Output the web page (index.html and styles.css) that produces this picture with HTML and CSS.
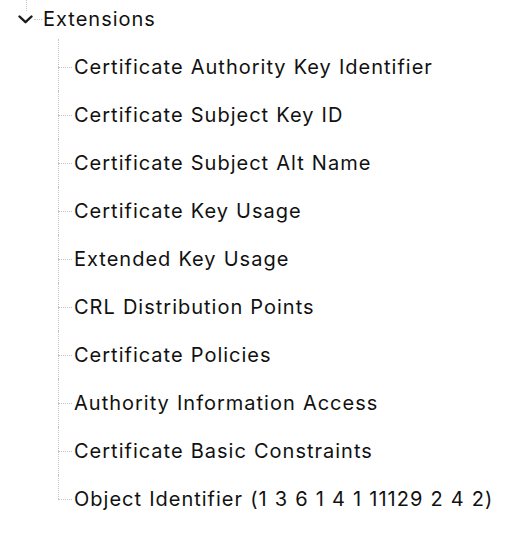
FILE: index.html
```html
<!DOCTYPE html>
<html>
<head>
<meta charset="utf-8">
<link rel="stylesheet" href="styles.css">
</head>
<body>
<div class="tree">
  <div class="root">
    <svg class="chev" width="15" height="9" viewBox="0 0 15 9"><path d="M1.5 1.5 L7.5 7.2 L13.5 1.5" fill="none" stroke="#1a1a1a" stroke-width="2.4" stroke-linecap="round" stroke-linejoin="round"/></svg>
    <span class="link"></span>
    <span class="label">Extensions</span>
  </div>
  <ul class="children">
    <li>Certificate Authority Key Identifier</li>
    <li>Certificate Subject Key ID</li>
    <li>Certificate Subject Alt Name</li>
    <li>Certificate Key Usage</li>
    <li>Extended Key Usage</li>
    <li>CRL Distribution Points</li>
    <li>Certificate Policies</li>
    <li>Authority Information Access</li>
    <li>Certificate Basic Constraints</li>
    <li>Object Identifier (1 3 6 1 4 1 11129 2 4 2)</li>
  </ul>
</div>
</body>
</html>
```
FILE: styles.css
```css
html, body {
  margin: 0;
  padding: 0;
  background: #ffffff;
}
body {
  font-family: Inter, "Noto Sans", sans-serif;
  font-size: 20px;
  letter-spacing: 1px;
  word-spacing: 0.5px;
  color: #111111;
}
.tree {
  padding-left: 18px;
}
.root {
  position: relative;
  display: flex;
  align-items: center;
  height: 38px;
}
.root::before {
  content: "";
  position: absolute;
  left: 8px;
  top: 0;
  height: 11px;
  border-left: 1px dotted #c4c4c4;
}
.chev {
  display: block;
  flex: none;
}
.link {
  width: 8px;
  margin-left: 1px;
  border-top: 1px dotted #c4c4c4;
  align-self: center;
}
.label {
  margin-left: 1px;
}
.children {
  list-style: none;
  margin: 5px 0 0 40px;
  padding: 0;
}
.children li {
  position: relative;
  height: 48px;
  display: flex;
  align-items: center;
  padding-left: 16px;
  white-space: nowrap;
}
.children li::before {
  content: "";
  position: absolute;
  left: 0;
  top: 0;
  bottom: 0;
  border-left: 1px dotted #c4c4c4;
}
.children li:first-child::before {
  top: -4px;
}
.children li:last-child::before {
  bottom: 50%;
}
.children li::after {
  content: "";
  position: absolute;
  left: 0;
  top: 50%;
  width: 14px;
  border-top: 1px dotted #c4c4c4;
}
```
